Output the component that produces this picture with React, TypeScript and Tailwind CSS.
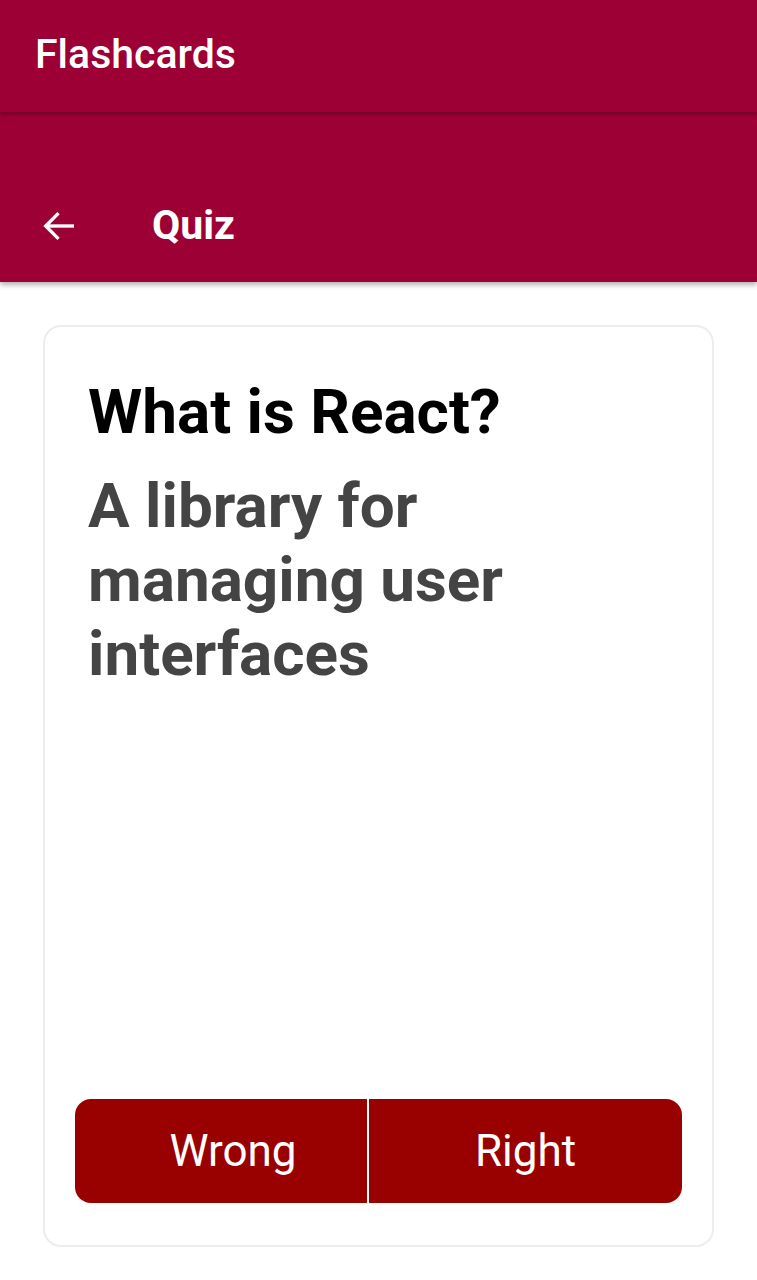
import React from 'react'

const font = {fontFamily: 'Roboto, "Noto Sans", sans-serif'}

const BackArrow = () => (
    <svg width="40" height="40" viewBox="0 0 24 24" fill="none" stroke="white" strokeWidth="2" strokeLinecap="square">
        <path d="M20 12H5"/>
        <path d="M11 5l-7 7 7 7"/>
    </svg>
)

const App = () => {
    return (
        <div className="w-[757px] h-[1280px] bg-white overflow-hidden" style={font}>
            <div className="relative z-20 h-[112px] bg-[#9d0034] flex items-center px-[35px] shadow-[0_2px_4px_rgba(0,0,0,0.3)]">
                <span className="text-white text-[41px] font-medium leading-none -mt-[4px]">Flashcards</span>
            </div>
            <div className="relative z-10 h-[170px] bg-[#9d0034] flex items-end pb-[36px] shadow-[0_3px_5px_rgba(0,0,0,0.3)]">
                <div className="w-[152px] pl-[39px] flex items-center">
                    <BackArrow/>
                </div>
                <span className="text-white text-[41px] font-bold leading-none">Quiz</span>
            </div>
            <div className="px-[43px] pt-[43px]">
                <div className="h-[922px] border-2 border-[#ededed] rounded-[18px] flex flex-col">
                    <div className="px-[43px] pt-[48px]">
                        <h1 className="text-[62px] font-bold text-black leading-[74px]">What is React?</h1>
                        <p className="text-[62px] font-bold text-[#444444] leading-[74px] mt-[20px]">
                            A library for managing user interfaces
                        </p>
                    </div>
                    <div className="mt-auto px-[30px] pb-[42px]">
                        <div className="flex h-[104px] rounded-[16px] overflow-hidden bg-[#990000]">
                            <button className="w-[294px] pl-[24px] flex items-center justify-center text-white text-[44px] border-r-2 border-white">
                                Wrong
                            </button>
                            <button className="flex-1 flex items-center justify-center text-white text-[44px]">
                                Right
                            </button>
                        </div>
                    </div>
                </div>
            </div>
        </div>
    )
}

export default App
